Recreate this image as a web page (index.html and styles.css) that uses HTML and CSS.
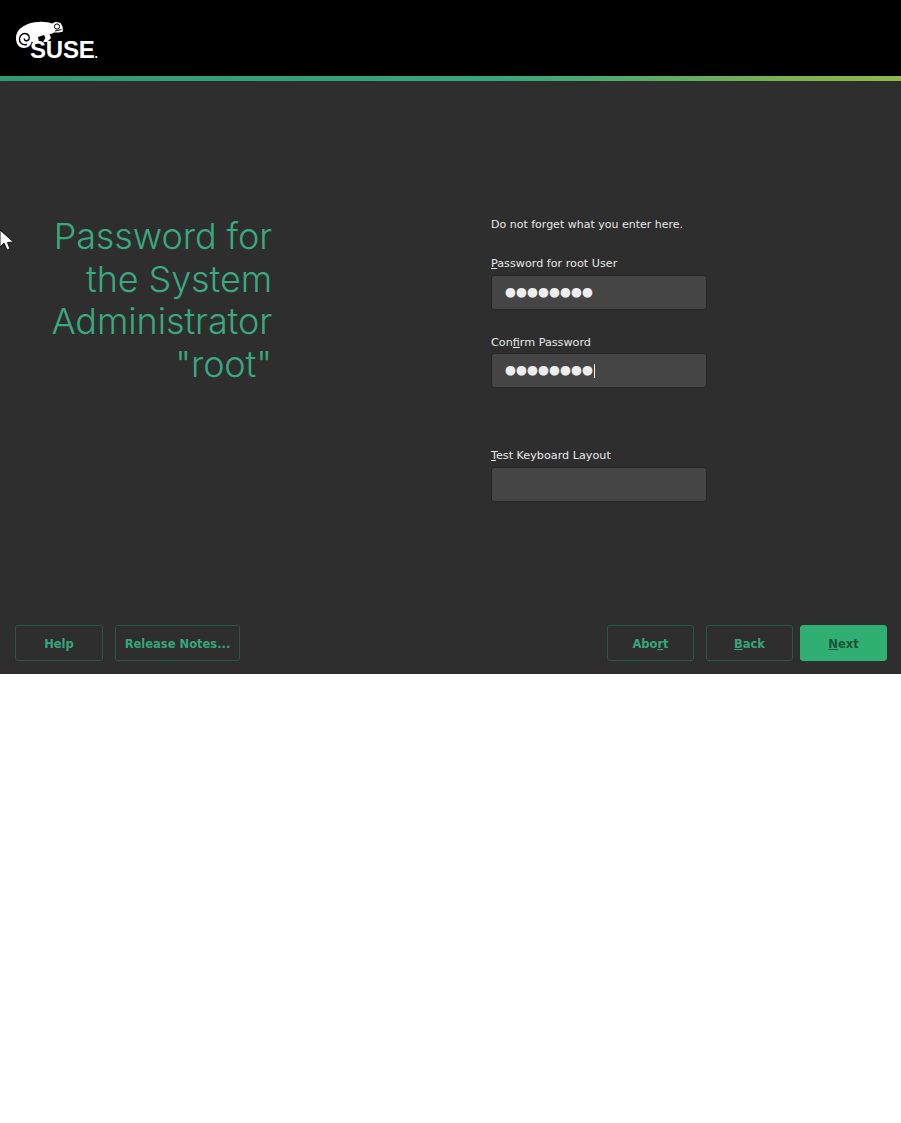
FILE: index.html
```html
<!DOCTYPE html>
<html lang="en">
<head>
<meta charset="utf-8">
<title>Password for the System Administrator</title>
<link rel="stylesheet" href="styles.css">
</head>
<body>
<div class="screen">
  <header class="topbar">
    <div class="logo">
      <svg class="logo-mark" width="50" height="30" viewBox="0 0 50 30" aria-hidden="true">
        <path fill="#fff" d="M0 17C0 11 4 7 8 5C12 2.500 17 1 23 1C28 0.500 33 1.500 36 2.500L40 .8L44.500 2L46.500 5.500L47 10.500L43 11.500L38 11.500C36.500 12.500 35 13 33.500 13L35 17L31 21L27 21L29.500 17L28 14L22 16L23 21L15.500 21C15 24 12 27 8 27C3 27 0 23 0 17Z"/>
        <path fill="none" stroke="#000" stroke-width="1.400" d="M11 23.500C6.500 25 3 21.500 3.500 17.500C4 13.500 8 11.500 11 13C14 14.500 14 18.500 11.500 19.500C9.500 20.300 8 19 8.500 17.500"/>
        <circle cx="41" cy="5.500" r="2.600" fill="none" stroke="#000" stroke-width="1"/>
        <path fill="none" stroke="#000" stroke-width="1" d="M39 10L45.500 8.500"/>
      </svg>
      <span class="logo-text">SUSE<span class="logo-dot">.</span></span>
    </div>
  </header>
  <div class="accent"></div>
  <main class="content">
    <h1 class="title">Password for<br>the System<br>Administrator<br>"root"</h1>
    <form class="form">
      <p class="hint">Do not forget what you enter here.</p>
      <div class="field">
        <label class="label"><u>P</u>assword for root User</label>
        <div class="input"><span class="dots">●●●●●●●●</span></div>
      </div>
      <div class="field field-confirm">
        <label class="label">Con<u>f</u>irm Password</label>
        <div class="input"><span class="dots">●●●●●●●●</span><span class="caret"></span></div>
      </div>
      <div class="field field-test">
        <label class="label"><u>T</u>est Keyboard Layout</label>
        <div class="input"></div>
      </div>
    </form>
  </main>
  <footer class="actions">
    <button class="btn btn-help" type="button">Help</button>
    <button class="btn btn-notes" type="button">Release Notes...</button>
    <span class="spacer"></span>
    <button class="btn btn-nav" type="button">Abo<u>r</u>t</button>
    <button class="btn btn-nav" type="button"><u>B</u>ack</button>
    <button class="btn btn-nav btn-primary" type="button"><u>N</u>ext</button>
  </footer>
  <svg class="pointer" width="14" height="22" viewBox="0 0 14 22" aria-hidden="true">
    <path fill="#fff" stroke="#111" stroke-width="1" d="M0 1V18L4 14L7 21L10 20L7.500 13.500L13.500 13Z"/>
  </svg>
</div>
</body>
</html>
```
FILE: styles.css
```css
* { box-sizing: border-box; }
html, body { margin: 0; background: #fff; }
.screen {
  position: relative;
  width: 901px;
  height: 674px;
  background: #2e2e2e;
  display: flex;
  flex-direction: column;
  overflow: hidden;
  font-family: "DejaVu Sans", sans-serif;
}
.topbar {
  height: 76px;
  flex: none;
  background: #000;
  padding: 21px 0 0 16px;
}
.logo { position: relative; width: 82px; height: 40px; }
.logo-mark { display: block; }
.logo-text {
  position: absolute;
  left: 14px;
  top: 17px;
  font-family: "Liberation Sans", sans-serif;
  font-weight: 700;
  font-size: 24px;
  line-height: 24px;
  letter-spacing: -0.2px;
  color: #fff;
}
.logo-dot { font-size: 12px; letter-spacing: 0; }
.accent {
  height: 5px;
  flex: none;
  background: linear-gradient(90deg, #2f9a72 0%, #35a67b 55%, #7fb24f 90%, #8fb848 100%);
}
.content {
  flex: 1;
  display: flex;
  min-height: 0;
}
.title {
  margin: 0;
  width: 272px;
  padding-top: 134px;
  flex: none;
  text-align: right;
  font-family: "Inter", sans-serif;
  font-weight: 300;
  font-size: 36px;
  line-height: 42.7px;
  letter-spacing: -0.1px;
  color: #3aa97f;
}
.form {
  margin-left: 219px;
  padding-top: 137px;
  width: 216px;
  color: #e8e8e8;
}
.hint {
  margin: 0;
  font-size: 11px;
  line-height: 14px;
}
.field { margin-top: 25px; }
.field-confirm { margin-top: 26px; }
.field-confirm .label { margin-bottom: 3px; }
.field-test { margin-top: 61px; }
.label {
  display: block;
  font-size: 11.200px;
  line-height: 14px;
  margin-bottom: 4px;
}
.input {
  height: 35px;
  background: #454545;
  border: 1px solid #262626;
  border-radius: 3px;
  padding-left: 13px;
  display: flex;
  align-items: center;
}
.dots {
  font-size: 12.600px;
  line-height: 1;
  color: #eee;
}
.caret {
  width: 1px;
  height: 14px;
  margin-left: 1px;
  background: #eee;
}
.actions {
  flex: none;
  height: 49px;
  padding: 0 14px 13px 15px;
  display: flex;
  gap: 12px;
}
.spacer { flex: 1; }
.btn {
  height: 36px;
  padding: 2px 0 0;
  background: transparent;
  border: 1px solid #25584a;
  border-radius: 3px;
  color: #35a67b;
  font-family: "DejaVu Sans", sans-serif;
  font-weight: 700;
  font-size: 11.500px;
}
.btn-help { width: 88px; }
.btn-notes { width: 125px; }
.btn-nav { width: 87px; }
.btn-primary {
  margin-left: -5px;
  background: #2fb072;
  border-color: #2fb072;
  color: #1d4f3c;
}
.pointer {
  position: absolute;
  left: 0;
  top: 229px;
}
```
